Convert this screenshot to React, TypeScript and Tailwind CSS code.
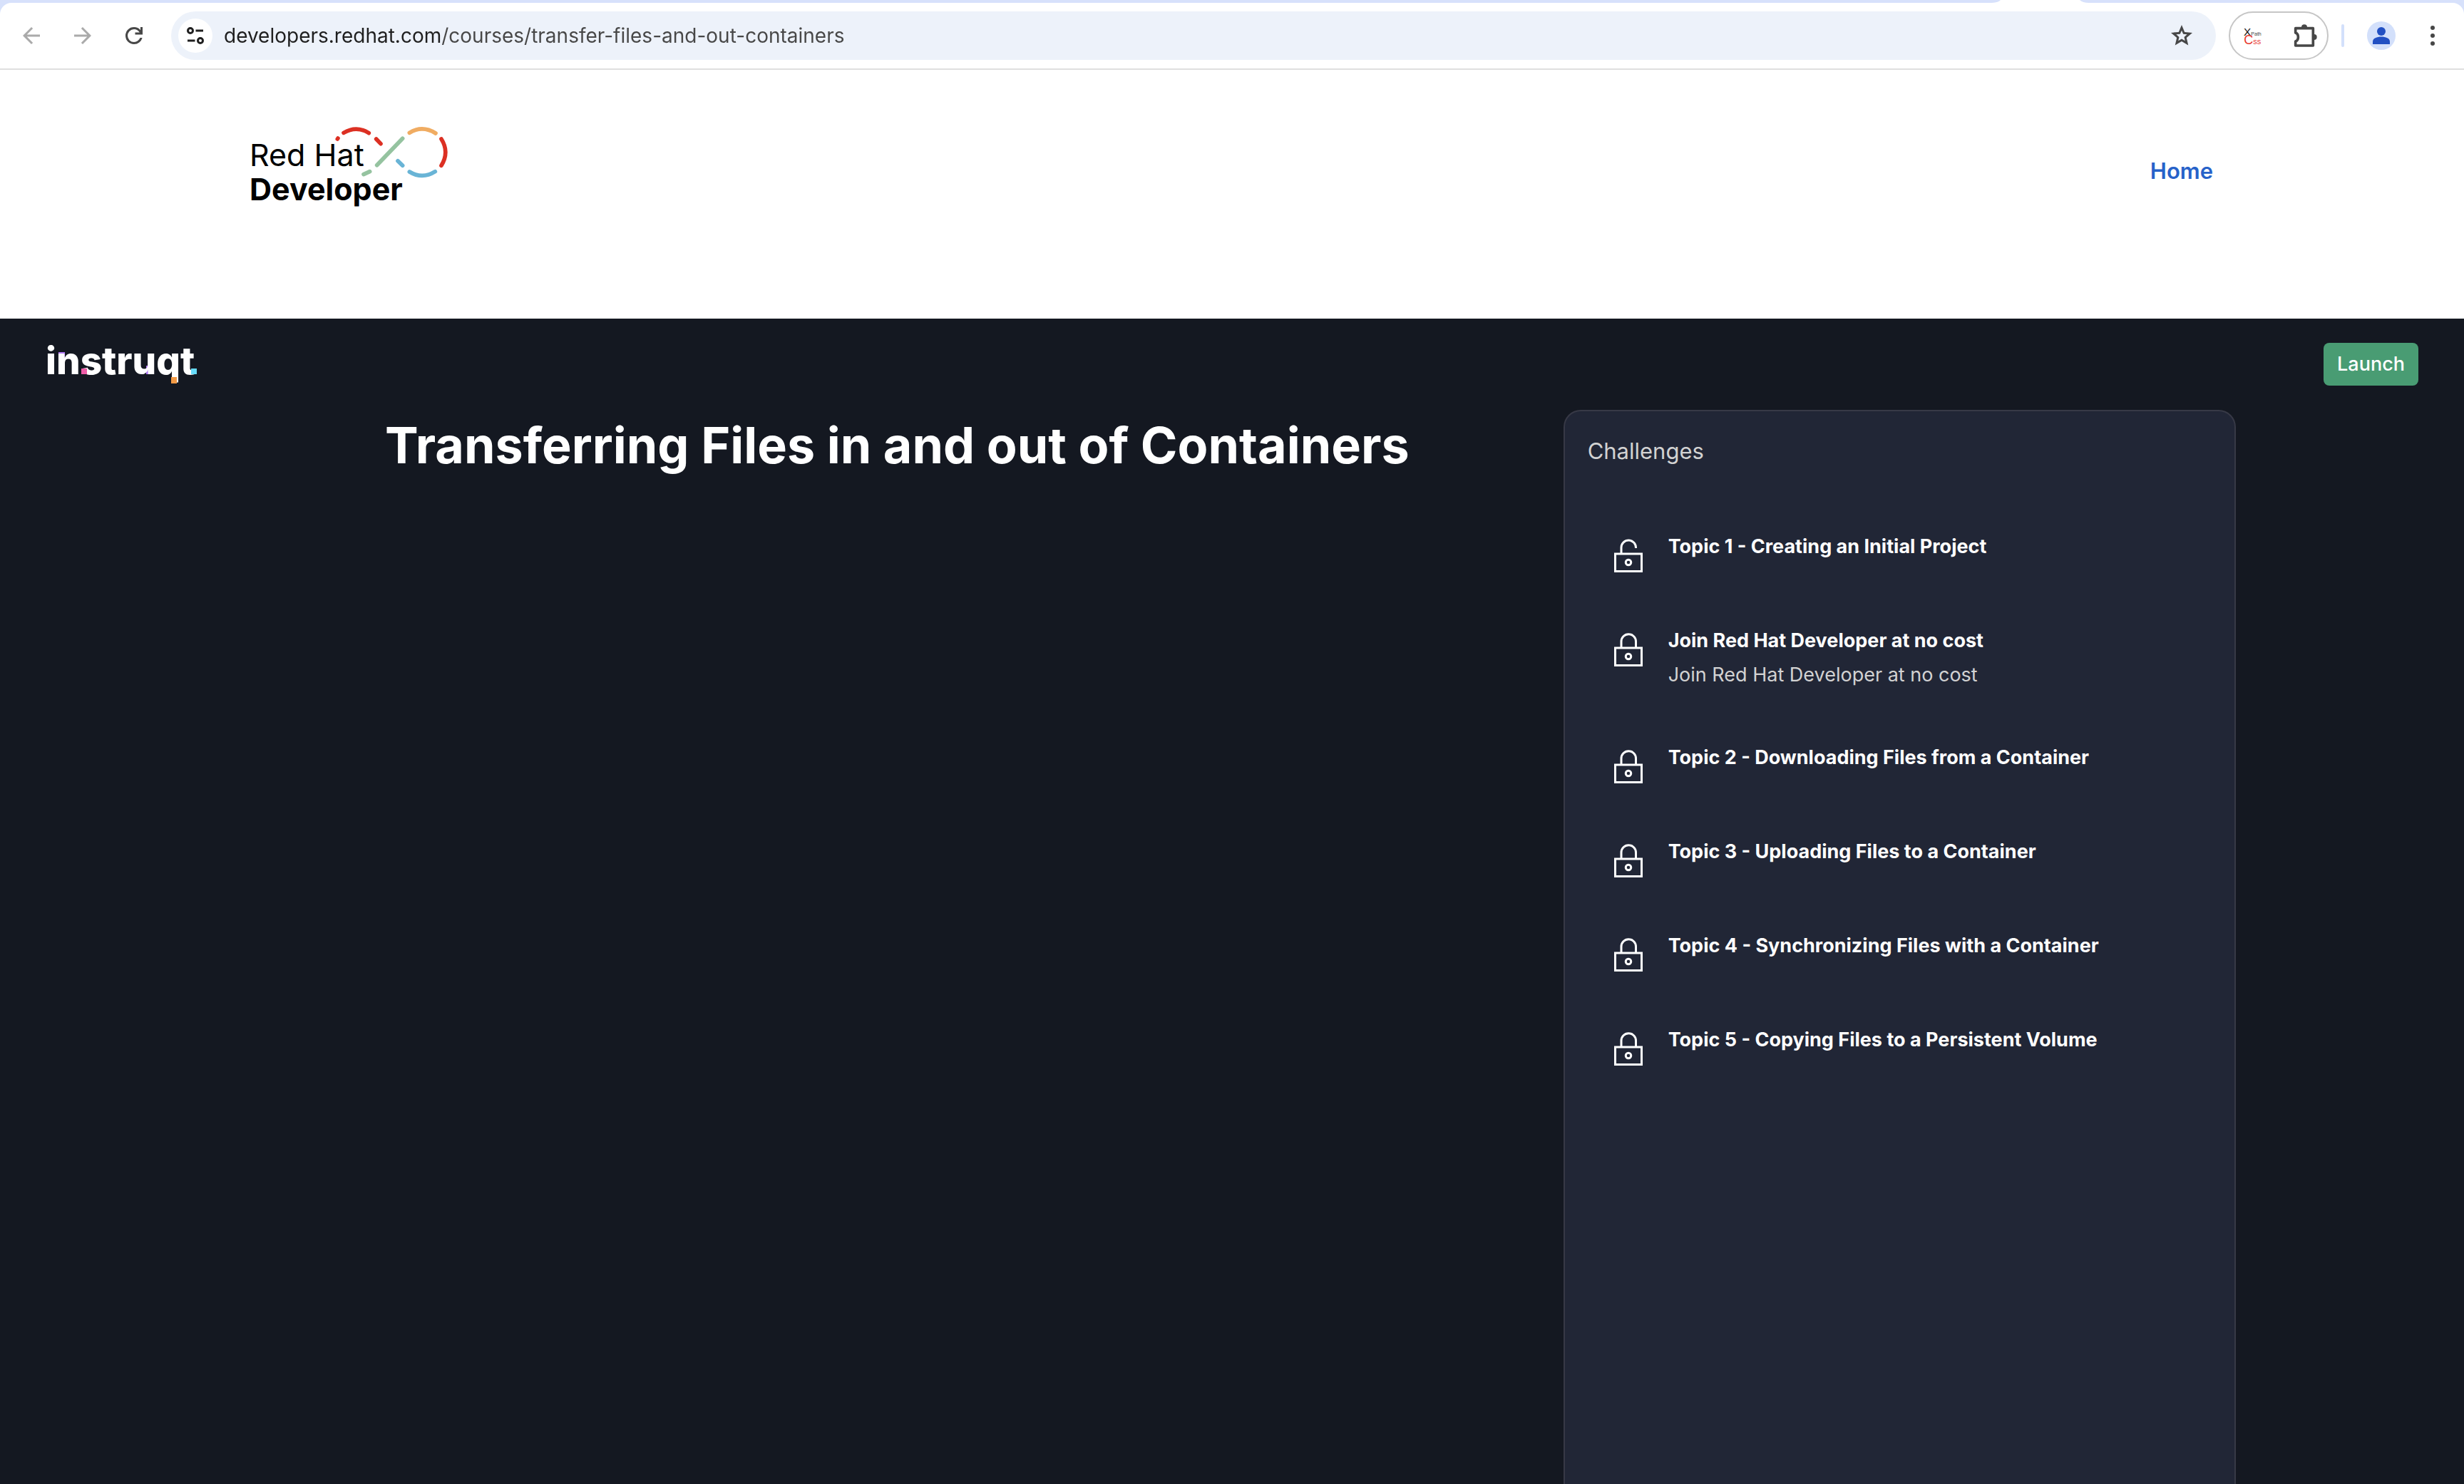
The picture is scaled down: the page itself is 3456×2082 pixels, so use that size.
import type { ReactNode } from 'react';

type Challenge = { title: string; teaser?: string; unlocked?: boolean };

const challenges: Challenge[] = [
  { title: 'Topic 1 - Creating an Initial Project', unlocked: true },
  { title: 'Join Red Hat Developer at no cost', teaser: 'Join Red Hat Developer at no cost' },
  { title: 'Topic 2 - Downloading Files from a Container' },
  { title: 'Topic 3 - Uploading Files to a Container' },
  { title: 'Topic 4 - Synchronizing Files with a Container' },
  { title: 'Topic 5 - Copying Files to a Persistent Volume' },
];

const ARROW = 'm7.825 13 5.6 5.6L12 20l-8-8 8-8 1.425 1.4-5.6 5.6H20v2z';
const RELOAD =
  'M12 20q-3.35 0-5.675-2.325T4 12t2.325-5.675T12 4q1.725 0 3.3.713T18 6.75V4h2v7h-7V9h4.2q-.8-1.4-2.187-2.2T12 6Q9.5 6 7.75 7.75T6 12t1.75 4.25T12 18q1.925 0 3.475-1.1T17.65 14h2.1q-.7 2.65-2.85 4.325T12 20';
const STAR =
  'm8.85 16.825 3.15-1.9 3.15 1.925-.825-3.6 2.775-2.4-3.65-.325-1.45-3.4-1.45 3.375-3.65.325 2.775 2.425zM5.825 21l1.625-7.025L2 9.25l7.2-.625L12 2l2.8 6.625 7.2.625-5.45 4.725L18.175 21 12 17.275z';

function ToolButton({ label, children }: { label: string; children: ReactNode }) {
  return (
    <button type="button" aria-label={label} className="shrink-0">
      {children}
    </button>
  );
}

function MaterialIcon({ d, className }: { d: string; className: string }) {
  return (
    <svg viewBox="0 0 24 24" className={className} fill="currentColor" aria-hidden="true">
      <path d={d} />
    </svg>
  );
}

function BrowserToolbar() {
  return (
    <div className="relative bg-[#d7e1fb] pt-1">
      <svg viewBox="0 0 139 4" className="absolute top-0 right-[526px] h-1 w-[139px]" aria-hidden="true">
        <path d="M0 4Q12 4 15 0H126Q130 4 139 4Z" fill="#fff" />
      </svg>
      <div className="flex h-[94px] items-center rounded-t-2xl border-b-2 border-[#dfdfdf] bg-white pr-[26px] pl-[26px]">
        <div className="flex items-center gap-9">
          <ToolButton label="Back">
            <MaterialIcon d={ARROW} className="size-9 text-[#aaaaaa]" />
          </ToolButton>
          <ToolButton label="Forward">
            <MaterialIcon d={ARROW} className="size-9 rotate-180 text-[#aaaaaa]" />
          </ToolButton>
          <ToolButton label="Reload">
            <MaterialIcon d={RELOAD} className="size-9 text-[#474747]" />
          </ToolButton>
        </div>

        <div className="ml-[34px] flex h-[68px] flex-1 items-center rounded-full bg-[#edf2fa] pr-[30px] pl-[10px]">
          <button
            type="button"
            aria-label="View site information"
            className="flex size-12 shrink-0 items-center justify-center rounded-full bg-white"
          >
            <svg viewBox="0 0 24 24" className="size-6" fill="none" stroke="#1f1f1f" strokeWidth="3" aria-hidden="true">
              <circle cx="5" cy="5" r="3.5" />
              <path d="M12.5 5H23M1 19h10.500" />
              <circle cx="19" cy="19" r="3.5" />
            </svg>
          </button>
          <input
            type="text"
            aria-label="Address"
            defaultValue="developers.redhat.com/courses/transfer-files-and-out-containers"
            className="ml-4 h-[60px] min-w-0 flex-1 bg-[linear-gradient(90deg,#1f1f1f_304px,#474747_304px)] bg-clip-text font-[Inter,sans-serif] text-[28px] text-transparent outline-none"
          />
          <ToolButton label="Bookmark this tab">
            <MaterialIcon d={STAR} className="size-9 text-[#474747]" />
          </ToolButton>
        </div>

        <div className="ml-[18px] flex h-[68px] items-center gap-[42px] rounded-full border-2 border-[#c6c6c6] pr-3 pl-[18px]">
          <ToolButton label="XPath and CSS extension">
            <svg
              viewBox="380 108 84 84"
              className="size-7 overflow-visible font-[Liberation_Sans,sans-serif]"
              aria-hidden="true"
            >
              <text x="383" y="149" fontSize="46" fill="#111">X</text>
              <text x="414" y="151" fontSize="21" fill="#444">Path</text>
              <text x="384" y="186" fontSize="54" fill="#e8362d">C</text>
              <text x="423" y="186" fontSize="33" fill="#e8362d">ss</text>
            </svg>
          </ToolButton>
          <ToolButton label="Extensions">
            <svg viewBox="588 90 108 108" className="size-9" aria-hidden="true">
              <path
                d="M599 113H673V186H599V168C614 163 614 137 599 132Z"
                fill="none"
                stroke="#474747"
                strokeWidth="11"
                strokeLinejoin="round"
              />
              <path d="M624 109a12 12 0 0 1 24 0zM677 138a12 12 0 0 1 0 24z" fill="#474747" />
            </svg>
          </ToolButton>
        </div>

        <div className="ml-[18px] h-8 w-1 rounded-full bg-[#d3e0fb]" />

        <div className="ml-8 flex items-center gap-[34px]">
          <ToolButton label="Profile">
            <svg viewBox="0 0 40 40" className="size-10" aria-hidden="true">
              <circle cx="20" cy="20" r="20" fill="#d3e0fb" />
              <circle cx="20" cy="14" r="6" fill="#2250c3" />
              <path d="M8 32v-3.500C8 23.500 14 21.500 20 21.500s12 2 12 7V32z" fill="#2250c3" />
            </svg>
          </ToolButton>
          <ToolButton label="Browser menu">
            <svg viewBox="0 0 36 36" className="size-9" fill="#474747" aria-hidden="true">
              <circle cx="18" cy="7" r="3" />
              <circle cx="18" cy="18" r="3" />
              <circle cx="18" cy="29" r="3" />
            </svg>
          </ToolButton>
        </div>
      </div>
    </div>
  );
}

function RedHatDeveloperLogo() {
  return (
    <svg viewBox="0 0 290 128" className="h-32 w-[290px]" role="img" aria-label="Red Hat Developer">
      <g className="font-[Inter,sans-serif]" fill="#000">
        <text x="0" y="61" fontSize="43">Red Hat</text>
        <text x="0" y="109" fontSize="43" fontWeight="700">Developer</text>
      </g>
      <g transform="translate(-20 -12) scale(0.33333)" fill="none" strokeWidth="17" strokeLinecap="round">
        <path d="M430 105l2-3M456 79Q510 47 562 80M593 105l19 20M867 105Q902 160 867 217" stroke="#dc3023" />
        <path d="M733 79Q787 46 843 81" stroke="#f0ac62" />
        <path d="M596 215L704 103M540 254l26-12" stroke="#95c3a0" />
        <path d="M684 197l20 20M733 243Q787 276 841 242" stroke="#69b4d6" />
      </g>
    </svg>
  );
}

function InstruqtLogo() {
  return (
    <svg viewBox="64 482 216 60" className="h-[60px] w-[216px] overflow-visible" role="img" aria-label="instruqt">
      <path d="M82 495h9v12h-9zM205 514h8v12h-8z" fill="#b077f5" />
      <text x="64" y="526" fontSize="53" fontWeight="800" fill="#fff" className="font-[Inter,sans-serif]">
        instruqt
      </text>
      <path d="M114 518h8v8h-8z" fill="#ef5da8" />
      <path d="M240 530h8v9h-8z" fill="#f29a45" />
      <path d="M268 518h8v8h-8z" fill="#67dcfb" />
    </svg>
  );
}

function LockIcon({ open }: { open?: boolean }) {
  return (
    <svg viewBox="0 0 64 64" className="size-16 shrink-0" fill="none" stroke="#fff" strokeWidth="3" aria-hidden="true">
      <rect x="13.5" y="34" width="37" height="24.500" />
      <circle cx="32" cy="46" r="3.75" />
      <path
        d={
          open
            ? 'M22 34V25A10.250 10.250 0 0 1 42.500 25.500V26'
            : 'M22 34V25A10.250 10.250 0 0 1 42.500 25V34'
        }
      />
    </svg>
  );
}

export default function App() {
  return (
    <div className="flex min-h-screen flex-col bg-[#141821] font-[Inter,sans-serif]">
      <BrowserToolbar />

      <header className="flex items-start justify-between bg-white pt-[74px] pr-[352px] pb-[139px] pl-[350px]">
        <a href="#developer">
          <RedHatDeveloperLogo />
        </a>
        <nav className="py-[50px]">
          <a href="#home" className="block text-[31px] leading-9 font-semibold text-[#2762c9]">
            Home
          </a>
        </nav>
      </header>

      <div className="flex h-32 items-center justify-between px-16">
        <a href="#instruqt">
          <InstruqtLogo />
        </a>
        <button
          type="button"
          className="h-[60px] rounded-lg bg-[#499c73] px-[19px] text-[27px] font-medium text-white"
        >
          Launch
        </button>
      </div>

      <main className="flex flex-1 px-80">
        <div className="flex-1 pl-[220px]">
          <h1 className="text-[70px] leading-[100px] font-bold text-white">
            Transferring Files in and out of Containers
          </h1>
        </div>
        <section className="w-[33.5%] rounded-t-3xl border-2 border-b-0 border-[#373946] bg-[#212636] p-8">
          <h2 className="text-[31px] leading-[48px] text-[#d2d2d2]">Challenges</h2>
          <ol className="mt-[52px]">
            {challenges.map((c) => (
              <li key={c.title} className="flex items-start gap-6 px-[25px] py-[34px]">
                <LockIcon open={c.unlocked} />
                <div className="text-[27px] leading-[48px]">
                  <h3 className="font-bold text-white">{c.title}</h3>
                  {c.teaser && <p className="text-[#d2d2d2]">{c.teaser}</p>}
                </div>
              </li>
            ))}
          </ol>
        </section>
      </main>
    </div>
  );
}
